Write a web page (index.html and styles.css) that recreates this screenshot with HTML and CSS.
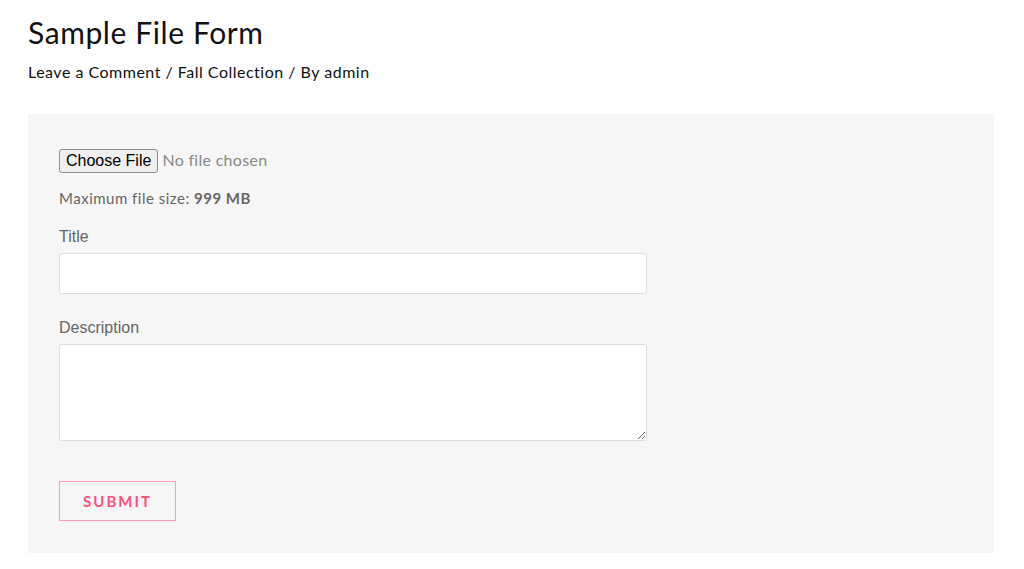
FILE: index.html
```html
<!DOCTYPE html>
<html>
<head>
<meta charset="utf-8">
<title>Sample File Form</title>
<link rel="stylesheet" href="styles.css">
</head>
<body>
<div class="page">
<header class="entry-header">
<h1 class="entry-title">Sample File Form</h1>
<div class="entry-meta"><a href="#">Leave a Comment</a> / <a href="#">Fall Collection</a> / By <a href="#">admin</a></div>
</header>
<form class="upload-form">
<div class="field">
<input type="file" class="file-input">
</div>
<p class="max-size">Maximum file size: <strong>999 MB</strong></p>
<div class="field">
<label class="field-label" for="title">Title</label>
<input type="text" id="title" class="text-input">
</div>
<div class="field">
<label class="field-label" for="description">Description</label>
<textarea id="description" class="text-area"></textarea>
</div>
<div class="actions">
<button type="submit" class="submit-btn">Submit</button>
</div>
</form>
</div>
</body>
</html>
```

FILE: styles.css
```css
body {
  margin: 0;
  font-family: "Lato", "Noto Sans", sans-serif;
  color: #111;
  background: #fff;
}
*, *:before, *:after { box-sizing: border-box; }
.page {
  padding: 12px 30px 0 28px;
}
.entry-title {
  margin: 0;
  font-size: 30px;
  font-weight: 400;
  line-height: 40px;
  letter-spacing: 0.6px;
}
.entry-meta {
  margin-top: 9px;
  font-size: 16px;
  line-height: 22px;
  letter-spacing: 0.5px;
}
.entry-meta a { color: inherit; text-decoration: none; }
.upload-form {
  margin-top: 31px;
  background: #f6f6f6;
  padding: 35px 31px 31px;
  height: 439px;
}
.file-input {
  font-family: "Lato", "Noto Sans", sans-serif;
  font-size: 16px;
  letter-spacing: 0.3px;
  color: #888;
}
.file-input::file-selector-button {
  font-family: "Liberation Sans", Arial, sans-serif;
  font-size: 16px;
  letter-spacing: 0;
  color: #000;
  height: 24px;
  padding: 0 6px;
  margin-right: 4px;
  border: 1px solid #8f8f8f;
  border-radius: 3px;
  background: #efefef;
}
.max-size {
  margin: 14px 0 19px;
  font-size: 15px;
  letter-spacing: 0.5px;
  color: #666;
  line-height: 22px;
}
.max-size strong { font-weight: 700; }
.field-label {
  display: block;
  font-family: "Liberation Sans", Arial, sans-serif;
  font-size: 16px;
  color: #666;
  margin-bottom: 7px;
}
.text-input, .text-area {
  display: block;
  width: 588px;
  border: 1px solid #ddd;
  border-radius: 3px;
  background: #fff;
}
.text-input { height: 41px; margin-bottom: 25px; }
.text-area { height: 97px; margin-top: 1px; resize: vertical; }
.actions { margin-top: 40px; }
.submit-btn {
  width: 117px;
  height: 40px;
  background: transparent;
  border: 1px solid #ff9ab5;
  color: #ff4f7b;
  font-family: "Lato", "Noto Sans", sans-serif;
  font-weight: 700;
  font-size: 15px;
  letter-spacing: 2px;
  text-transform: uppercase;
}
```
